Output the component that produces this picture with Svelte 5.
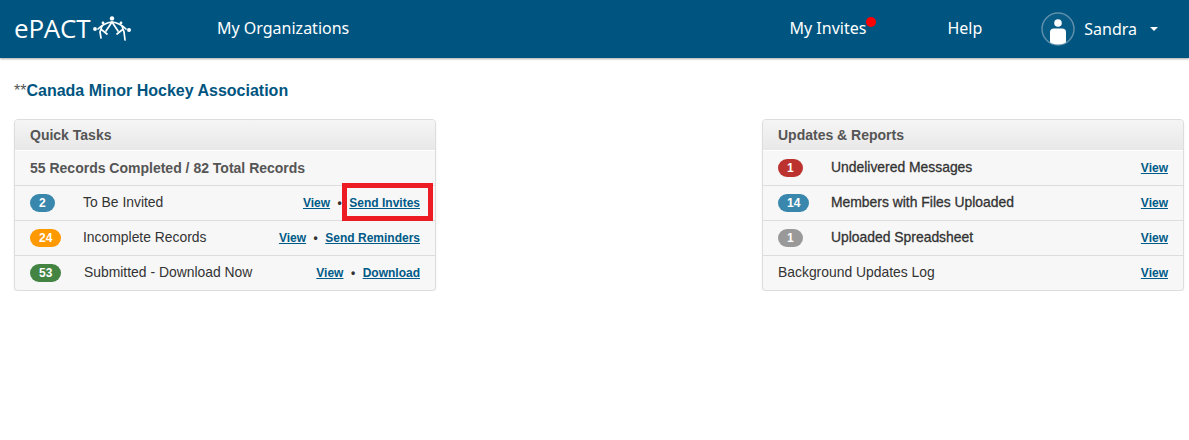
<script lang="ts">
  const quickRows = [
    { count: 2, color: 'blue', label: 'To Be Invited', action: 'Send Invites', mark: true },
    { count: 24, color: 'orange', label: 'Incomplete Records', action: 'Send Reminders' },
    { count: 53, color: 'green', label: 'Submitted - Download Now', action: 'Download' },
  ]
  const reportRows = [
    { count: 1, color: 'red', label: 'Undelivered Messages' },
    { count: 14, color: 'blue', label: 'Members with Files Uploaded' },
    { count: 1, color: 'grey', label: 'Uploaded Spreadsheet' },
  ]
</script>

<header class="topbar">
  <a class="logo" href="#home">
    <span>ePACT</span>
    <svg width="40" height="25" viewBox="0 0 40 25" aria-hidden="true">
      <g fill="#fff">
        <circle cx="20" cy="2.4" r="2.2" />
        <circle cx="3" cy="13" r="1.9" />
        <circle cx="37" cy="14" r="2" />
        <circle cx="11" cy="7" r="1.4" />
        <circle cx="29" cy="7" r="1.4" />
      </g>
      <g fill="none" stroke="#fff" stroke-width="1.7" stroke-linecap="round">
        <path d="M6 13 Q12 7 20 6 Q28 7 34 13" />
        <path d="M20 6 L14 15 M20 6 L26 15" />
        <path d="M10 10 L8 16 L9 22 M10 14 L15 18" />
        <path d="M30 10 L32 16 L33 24 M30 14 L25 18" />
      </g>
    </svg>
  </a>
  <a class="nav-link orgs" href="#orgs">My Organizations</a>
  <div class="spacer"></div>
  <a class="nav-link invites" href="#invites">My Invites<span class="dot"></span></a>
  <a class="nav-link help" href="#help">Help</a>
  <div class="user">
    <svg width="34" height="34" viewBox="0 0 34 34" aria-hidden="true">
      <defs>
        <clipPath id="ring"><circle cx="17" cy="17" r="15.5" /></clipPath>
      </defs>
      <circle cx="17" cy="17" r="16" fill="#075b85" stroke="#5f8fab" stroke-width="1.5" />
      <circle cx="17" cy="11" r="3.8" fill="#fff" />
      <path clip-path="url(#ring)" d="M9 34 V20 Q9 16.5 13 16.5 H21 Q25 16.5 25 20 V34 Z" fill="#fff" />
    </svg>
    <span class="nav-link">Sandra</span>
    <span class="caret"></span>
  </div>
</header>

<main class="page">
  <h1><span class="stars">**</span>Canada Minor Hockey Association</h1>
  <div class="panels">
    <section class="panel">
      <h2>Quick Tasks</h2>
      <div class="row summary">55 Records Completed / 82 Total Records</div>
      {#each quickRows as row}
        <div class="row">
          <span class="badge-cell"><span class="badge {row.color}">{row.count}</span></span>
          <span class="label" class:shift={row.count === 53}>{row.label}</span>
          <span class="links">
            <a href="#view">View</a>
            <span class="sep">•</span>
            <a class="action" class:marked={row.mark} href="#action">{row.action}</a>
          </span>
        </div>
      {/each}
    </section>

    <section class="panel">
      <h2>Updates &amp; Reports</h2>
      {#each reportRows as row}
        <div class="row">
          <span class="badge-cell"><span class="badge {row.color}">{row.count}</span></span>
          <span class="label medium">{row.label}</span>
          <span class="links"><a href="#view">View</a></span>
        </div>
      {/each}
      <div class="row">
        <span class="label">Background Updates Log</span>
        <span class="links"><a href="#view">View</a></span>
      </div>
    </section>
  </div>
</main>

<style>
  :global(body) {
    background: #fff;
    font-family: 'Liberation Sans', Arial, sans-serif;
    color: #333;
  }

  .topbar {
    display: flex;
    align-items: center;
    height: 58px;
    padding: 0 31px 2px 14px;
    box-sizing: border-box;
    background: #005580;
    box-shadow: 0 1px 2px rgba(0, 0, 0, 0.35);
  }

  .logo {
    display: flex;
    align-items: center;
    gap: 2px;
    color: #fff;
    text-decoration: none;
    font-family: 'Open Sans', sans-serif;
    font-size: 26px;
    letter-spacing: -0.2px;
    width: 203px;
  }

  .nav-link {
    font-family: 'Noto Sans', sans-serif;
    font-size: 16px;
    color: #fff;
    text-decoration: none;
  }

  .spacer {
    flex: 1;
  }

  .invites {
    position: relative;
    margin-right: 81px;
  }

  .dot {
    position: absolute;
    top: 0;
    right: -10px;
    width: 10px;
    height: 10px;
    border-radius: 50%;
    background: #f00;
  }

  .help {
    margin-right: 59px;
  }

  .user {
    display: flex;
    align-items: center;
    gap: 9px;
    margin-top: 2px;
  }

  .caret {
    margin-left: 4px;
    border-top: 4px solid #fff;
    border-left: 4px solid transparent;
    border-right: 4px solid transparent;
  }

  .page {
    padding: 23px 5px 0 14px;
  }

  h1 {
    margin: 0 0 18px;
    font-size: 16px;
    line-height: 20px;
    font-weight: 700;
    color: #005580;
  }

  .stars {
    font-weight: 400;
    color: #555;
  }

  .panels {
    display: flex;
    justify-content: space-between;
  }

  .panel {
    width: 422px;
    box-sizing: border-box;
    background: #f7f7f7;
    border: 1px solid #ddd;
    border-radius: 4px;
    box-shadow: 0 1px 2px rgba(0, 0, 0, 0.08);
    overflow: hidden;
  }

  h2 {
    margin: 0;
    height: 31px;
    padding: 0 15px;
    font-size: 14px;
    line-height: 30px;
    font-weight: 700;
    color: #555;
    background: linear-gradient(#f5f5f5, #e8e8e8);
    border-bottom: 1px solid #fff;
    box-sizing: border-box;
  }

  .row {
    display: flex;
    align-items: center;
    height: 35px;
    padding: 0 15px;
    box-sizing: border-box;
    border-bottom: 1px solid #ddd;
    font-size: 13.9px;
  }

  .row:last-child {
    height: 34px;
    border-bottom: 0;
  }

  .summary {
    font-size: 14px;
    font-weight: 700;
    color: #555;
  }

  .badge-cell {
    flex: none;
    width: 53px;
  }

  .badge {
    display: inline-block;
    min-width: 24px;
    height: 18px;
    padding: 0 9px;
    box-sizing: border-box;
    border-radius: 9px;
    font-size: 12px;
    font-weight: 700;
    line-height: 18px;
    text-align: center;
    color: #fff;
    vertical-align: middle;
  }

  .blue {
    background: #3a87ad;
  }

  .orange {
    background: #ff9900;
  }

  .green {
    background: #438443;
  }

  .red {
    background: #bb322f;
  }

  .grey {
    background: #999;
  }

  .label {
    margin-bottom: 2px;
    color: #333;
  }

  .shift {
    margin-left: 1px;
  }

  .medium {
    -webkit-text-stroke: 0.3px #333;
  }

  .links {
    margin-left: auto;
    margin-bottom: 1px;
    display: flex;
    gap: 7.5px;
    font-size: 12px;
    font-weight: 700;
  }

  .links a {
    color: #005a87;
  }

  .sep {
    color: #333;
  }

  .marked {
    position: relative;
  }

  .marked::after {
    content: '';
    position: absolute;
    top: -13px;
    left: -7px;
    right: -13px;
    bottom: -11px;
    border: 5px solid #ed1c24;
  }
</style>
